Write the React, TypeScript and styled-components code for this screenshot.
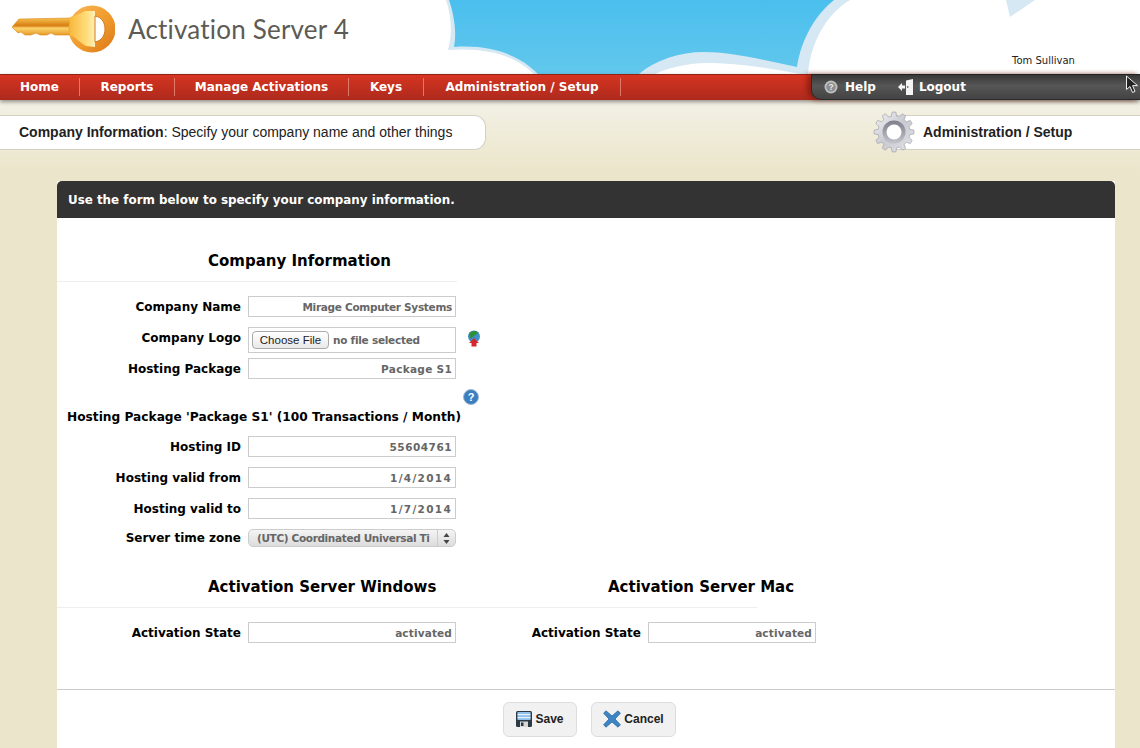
import styled, { createGlobalStyle } from 'styled-components';

const GlobalStyle = createGlobalStyle`
  html, body {
    margin: 0;
    padding: 0;
    height: 748px;
    overflow: hidden;
    background: #ebe6cb;
    font-family: "DejaVu Sans", sans-serif;
  }
  * { box-sizing: border-box; }
`;

const Page = styled.div`
  position: relative;
  height: 748px;
  display: flex;
  flex-direction: column;
  background: linear-gradient(#f3f1e6 100px, #ebe6cb 170px);
`;

const Header = styled.header`
  position: relative;
  height: 74px;
  background: #fff;
  flex: none;
`;
const Sky = styled.svg`
  position: absolute;
  inset: 0;
`;
const Brand = styled.div`
  position: relative;
  display: flex;
  align-items: center;
  height: 60px;
  gap: 13px;
  padding-left: 10px;
`;
const BrandName = styled.span`
  margin-bottom: 2px;
  font-family: "Lato", sans-serif;
  font-size: 26px;
  letter-spacing: 0.2px;
  color: #5d5b53;
`;
const UserName = styled.span`
  position: absolute;
  left: 1012px;
  top: 55px;
  font-size: 10px;
  color: #222;
  line-height: 12px;
`;

const NavBar = styled.nav`
  flex: none;
  height: 26px;
  display: flex;
  justify-content: space-between;
  background: linear-gradient(#d63421, #ad2a1d);
  border-top: 1px solid #8f2416;
  box-shadow: 0 2px 4px rgba(70, 70, 60, 0.55);
  position: relative;
`;
const NavList = styled.ul`
  margin: 0;
  padding: 0 0 2px;
  list-style: none;
  display: flex;
  align-items: center;
`;
const NavItem = styled.li<{ $width: number }>`
  width: ${(p) => p.$width}px;
  height: 18px;
  line-height: 18px;
  text-align: center;
  border-right: 1px solid #e0786a;
  font-size: 12px;
  font-weight: 700;
  color: #fff;
  white-space: nowrap;
`;
const UserMenu = styled.div`
  width: 329px;
  display: flex;
  align-items: center;
  padding-left: 12px;
  border-bottom-left-radius: 10px;
  background: linear-gradient(#383838, #565656 45%, #434343);
  border-top: 1px solid #222;
  border-left: 1px solid #2a2a2a;
  border-bottom: 1px solid #2a2a2a;
  box-shadow: -4px 0 5px rgba(110, 20, 10, 0.6);
  margin-top: -1px;
`;
const MenuLink = styled.span<{ $gap: number; $after: number }>`
  display: flex;
  align-items: center;
  gap: ${(p) => p.$gap}px;
  margin-right: ${(p) => p.$after}px;
  font-size: 12px;
  font-weight: 700;
  color: #fff;
`;
const Pointer = styled.svg`
  position: absolute;
  left: 1125px;
  top: 0;
`;

const TitleRow = styled.div`
  flex: none;
  height: 35px;
  margin-top: 15px;
  display: flex;
  justify-content: space-between;
  font-family: "Liberation Sans", sans-serif;
  font-size: 14px;
  color: #222;
`;
const PageTitle = styled.div`
  width: 486px;
  padding: 0 0 2px 19px;
  display: flex;
  align-items: center;
  background: #fff;
  border: 1px solid #d2d0c2;
  border-left: 0;
  border-radius: 0 12px 12px 0;
  white-space: pre;
`;
const Strong = styled.b`
  font-weight: 700;
`;
const Section = styled.div`
  position: relative;
  width: 247px;
  padding: 0 0 2px 29px;
  display: flex;
  align-items: center;
  background: #fff;
  border: 1px solid #d2d0c2;
  border-right: 0;
  font-weight: 700;
`;
const GearIcon = styled.svg`
  position: absolute;
  left: -21px;
  top: -5px;
`;

const Panel = styled.main`
  flex: 1;
  margin: 31px 25px 0 57px;
  display: flex;
  flex-direction: column;
  background: #fff;
`;
const PanelHead = styled.div`
  flex: none;
  height: 37px;
  padding-left: 11px;
  display: flex;
  align-items: center;
  background: #333;
  border-radius: 5px 5px 0 0;
  font-size: 11.9px;
  font-weight: 700;
  color: #fff;
`;
const Form = styled.form`
  flex: none;
  height: 472px;
  border-bottom: 1px solid #ccc;
`;
const Heading = styled.h2<{ $top?: number }>`
  margin: 0;
  padding: ${(p) => p.$top ?? 0}px 0 10px 151px;
  font-size: 15px;
  line-height: 20px;
  font-weight: 700;
  color: #000;
  white-space: nowrap;
`;
const HeadingRule = styled.div<{ $width: number }>`
  width: ${(p) => p.$width}px;
  border-bottom: 1px solid #eee;
`;
const Columns = styled.div`
  display: flex;
`;
const Column = styled.div<{ $width: number }>`
  width: ${(p) => p.$width}px;
`;
const Row = styled.div<{ $top: number; $field?: number }>`
  display: grid;
  grid-template-columns: 184px ${(p) => p.$field ?? 208}px;
  column-gap: 7px;
  margin-top: ${(p) => p.$top}px;
  align-items: center;
`;
const Label = styled.label<{ $raise?: number }>`
  padding-bottom: ${(p) => p.$raise ?? 0}px;
  text-align: right;
  font-size: 12px;
  font-weight: 700;
  color: #000;
  white-space: nowrap;
`;
const Field = styled.input<{ $spacing?: number }>`
  display: block;
  width: 100%;
  height: 21px;
  padding: 0 3px;
  border: 1px solid #ccc;
  background: #fff;
  text-align: right;
  font-family: "DejaVu Sans", sans-serif;
  font-size: 10.5px;
  font-weight: 700;
  letter-spacing: ${(p) => p.$spacing ?? 0}px;
  color: #666;
  outline: none;
`;
const FileBox = styled.div`
  position: relative;
  height: 26px;
  padding-left: 3px;
  display: flex;
  align-items: center;
  gap: 4px;
  border: 1px solid #ccc;
  font-size: 10.5px;
  font-weight: 700;
  letter-spacing: -0.25px;
  color: #666;
`;
const ChooseButton = styled.button`
  width: 77px;
  height: 18px;
  padding: 0;
  border: 1px solid #aaa;
  border-radius: 4px;
  background: linear-gradient(#fff, #e9e9e9);
  font-family: "Liberation Sans", sans-serif;
  font-size: 11.5px;
  letter-spacing: 0;
  color: #222;
`;
const SideIcon = styled.svg<{ $left: number; $top: number }>`
  position: absolute;
  left: ${(p) => p.$left}px;
  top: ${(p) => p.$top}px;
`;
const PackageRow = styled.div`
  position: relative;
  margin-top: 30px;
  padding-left: 10px;
  font-size: 12.2px;
  line-height: 16px;
  font-weight: 700;
  color: #000;
  white-space: nowrap;
`;
const SelectBox = styled.div`
  height: 18px;
  padding-left: 8px;
  display: flex;
  align-items: center;
  justify-content: space-between;
  border: 1px solid #ccc;
  border-radius: 5px;
  background: linear-gradient(#f4f4f4, #dcdcdc);
  font-size: 10.5px;
  font-weight: 700;
  letter-spacing: -0.35px;
  color: #666;
  white-space: nowrap;
`;
const SelectArrows = styled.span`
  flex: none;
  width: 18px;
  height: 100%;
  display: flex;
  align-items: center;
  justify-content: center;
  border-left: 1px solid #ccc;
`;
const Footer = styled.div`
  flex: 1;
  padding: 12px 0 0 7px;
  display: flex;
  justify-content: center;
  align-items: flex-start;
  gap: 14px;
`;
const ActionButton = styled.button<{ $width: number }>`
  width: ${(p) => p.$width}px;
  height: 35px;
  padding: 0 0 1px;
  display: flex;
  align-items: center;
  justify-content: center;
  gap: 3px;
  border: 1px solid #ddd;
  border-radius: 6px;
  background: #f1f1f1;
  font-family: "Liberation Sans", sans-serif;
  font-size: 12px;
  font-weight: 700;
  color: #222;
`;

function KeyLogo() {
  return (
    <svg width="105" height="50" viewBox="0 0 105 50">
      <defs>
        <linearGradient id="keyBlade" x1="0" y1="0" x2="0" y2="1">
          <stop offset="0" stopColor="#f7c24e" />
          <stop offset="0.45" stopColor="#d87e14" />
          <stop offset="0.6" stopColor="#fbd36a" />
          <stop offset="1" stopColor="#e89a28" />
        </linearGradient>
        <linearGradient id="keyHead" x1="0" y1="0" x2="1" y2="1">
          <stop offset="0" stopColor="#f7b956" />
          <stop offset="0.55" stopColor="#f09a2c" />
          <stop offset="1" stopColor="#d9771a" />
        </linearGradient>
        <linearGradient id="keyShine" x1="0" y1="0" x2="1" y2="0">
          <stop offset="0" stopColor="#f9b93e" />
          <stop offset="0.7" stopColor="#ffdf80" />
          <stop offset="1" stopColor="#fff0b8" />
        </linearGradient>
      </defs>
      <path
        d="M2 22 L9 14 L62 13 L66 27 L62 30 L45 30 L41 28 L37 30 L30 30 L26 28 L21 30 L15 30 L11 27 L8 28 Z"
        fill="url(#keyBlade)"
        stroke="#d9861c"
        strokeWidth="0.6"
      />
      <circle cx="82" cy="24" r="23.5" fill="url(#keyHead)" />
      <path d="M60 12 C66 11 70 8 75 6 L85 6 L85 42 L76 41 C70 38 66 32 60 30 Z" fill="url(#keyShine)" />
      <path d="M85 11 C92 12 95 18 95 24 C95 31 91 36 85 37 Z" fill="#fff" stroke="#d47a18" strokeWidth="1" />
    </svg>
  );
}

// gear outline with 12 teeth, centred on 0,0
function gearPath() {
  const points: string[] = [];
  for (let i = 0; i < 12; i++) {
    const a = (i * Math.PI * 2) / 12;
    const step = (Math.PI * 2) / 12;
    const corners: [number, number][] = [
      [16, a - step * 0.32],
      [20, a - step * 0.18],
      [20, a + step * 0.18],
      [16, a + step * 0.32],
    ];
    corners.forEach(([r, t]) => {
      points.push(`${(r * Math.sin(t)).toFixed(2)} ${(-r * Math.cos(t)).toFixed(2)}`);
    });
  }
  return `M${points.join(' L')} Z`;
}

function GearPicture() {
  return (
    <GearIcon width="42" height="42" viewBox="-21 -21 42 42">
      <defs>
        <linearGradient id="gearFill" x1="0" y1="0" x2="1" y2="1">
          <stop offset="0" stopColor="#f4f4f6" />
          <stop offset="0.5" stopColor="#c9c9d2" />
          <stop offset="1" stopColor="#e6e6ea" />
        </linearGradient>
        <linearGradient id="gearRing" x1="0" y1="0" x2="0" y2="1">
          <stop offset="0" stopColor="#7f7f8c" />
          <stop offset="1" stopColor="#c4c4cc" />
        </linearGradient>
      </defs>
      <path d={gearPath()} fill="url(#gearFill)" stroke="#a2a2aa" strokeWidth="0.7" />
      <circle r="11.5" fill="url(#gearRing)" />
      <circle r="7.5" fill="#fff" />
    </GearIcon>
  );
}

export default function App() {
  return (
    <Page>
      <GlobalStyle />
      <Header>
        <Sky width="1140" height="74" viewBox="0 0 1140 74">
          <defs>
            <linearGradient id="skyFill" x1="0" y1="0" x2="0" y2="1">
              <stop offset="0" stopColor="#4abfee" />
              <stop offset="1" stopColor="#62c7ec" />
            </linearGradient>
          </defs>
          <rect x="440" width="420" height="74" fill="#d5e8f3" />
          <path d="M449 0 C454 15 457 32 454 47 C490 44 520 55 538 74 L639 74 C655 60 680 52 704 52 C730 52 765 60 797 67 C801 40 815 15 834 0 Z" fill="url(#skyFill)" />
          <path d="M0 0 L446 0 C451 15 453 32 448 50 C485 47 515 55 534 74 L0 74 Z" fill="#fff" />
          <path d="M655 74 C670 67 690 63 706 63 C735 63 770 68 800 74 Z" fill="#fff" />
          <path d="M850 0 C825 15 810 45 808 74 L1140 74 L1140 0 Z" fill="#fff" />
          <path d="M1006 0 L1010 17 L1035 0 Z" fill="#d5e8f3" />
        </Sky>
        <Brand>
          <KeyLogo />
          <BrandName>Activation Server 4</BrandName>
        </Brand>
        <UserName>Tom Sullivan</UserName>
      </Header>

      <NavBar>
        <NavList>
          <NavItem $width={80}>Home</NavItem>
          <NavItem $width={95}>Reports</NavItem>
          <NavItem $width={174}>Manage Activations</NavItem>
          <NavItem $width={75}>Keys</NavItem>
          <NavItem $width={197}>Administration / Setup</NavItem>
        </NavList>
        <UserMenu>
          <MenuLink $gap={7} $after={22}>
            <svg width="14" height="14" viewBox="0 0 14 14">
              <circle cx="7" cy="7" r="6.5" fill="#bdbdbd" />
              <circle cx="7" cy="7" r="4.6" fill="#8d8d8d" />
              <text x="7" y="10" textAnchor="middle" fontSize="8.5" fontWeight="700" fontFamily="Liberation Sans" fill="#e8e8e8">?</text>
            </svg>
            Help
          </MenuLink>
          <MenuLink $gap={6} $after={0}>
            <svg width="15" height="16" viewBox="0 0 15 16">
              <path d="M8 1.5 L15 0 L15 16 L8 16 Z" fill="#f4f4f4" />
              <path d="M0 8 L4 4 L4 6.5 L7 6.5 L7 9.5 L4 9.5 L4 12 Z" fill="#f4f4f4" />
              <rect x="9" y="7" width="1.4" height="2" fill="#777" />
            </svg>
            Logout
          </MenuLink>
        </UserMenu>
        <Pointer width="14" height="20" viewBox="0 0 14 20">
          <path d="M1.5 1 L1.5 14.5 L5 11.5 L7.5 17.5 L10 16.4 L7.6 10.6 L12.5 10.6 Z" fill="#222" stroke="#eee" strokeWidth="1" />
        </Pointer>
      </NavBar>

      <TitleRow>
        <PageTitle>
          <span>
            <Strong>Company Information</Strong>: Specify your company name and other things
          </span>
        </PageTitle>
        <Section>
          <GearPicture />
          Administration / Setup
        </Section>
      </TitleRow>

      <Panel>
        <PanelHead>Use the form below to specify your company information.</PanelHead>
        <Form>
          <Heading $top={33}>Company Information</Heading>
          <HeadingRule $width={400} />
          <Row $top={14}>
            <Label>Company Name</Label>
            <Field readOnly value="Mirage Computer Systems" $spacing={-0.3} />
          </Row>
          <Row $top={10}>
            <Label $raise={4}>Company Logo</Label>
            <FileBox>
              <ChooseButton type="button">Choose File</ChooseButton>
              no file selected
              <SideIcon $left={218} $top={2} width="14" height="18" viewBox="0 0 14 18">
                <circle cx="7" cy="6.5" r="6" fill="#3f8fc8" />
                <path d="M2 3.5 C5 0.5 9 0.5 11 2.5 C9 5.5 6 5 4.5 9 C3 8 2 6 2 3.5 Z" fill="#2f8f3c" />
                <path d="M7 8 L12 13 L9.5 13 L9.5 16.5 L4.5 16.5 L4.5 13 L2 13 Z" fill="#d6282c" />
              </SideIcon>
            </FileBox>
          </Row>
          <Row $top={5}>
            <Label>Hosting Package</Label>
            <Field readOnly value="Package S1" $spacing={0.3} />
          </Row>
          <PackageRow>
            Hosting Package 'Package S1' (100 Transactions / Month)
            <SideIcon $left={406} $top={-20} width="16" height="16" viewBox="0 0 16 16">
              <circle cx="8" cy="8" r="7.5" fill="#3b7fc0" stroke="#9fb9d0" />
              <text x="8" y="12" textAnchor="middle" fontSize="11" fontWeight="700" fontFamily="Liberation Sans" fill="#fff">?</text>
            </SideIcon>
          </PackageRow>
          <Row $top={11}>
            <Label>Hosting ID</Label>
            <Field readOnly value="55604761" $spacing={0.5} />
          </Row>
          <Row $top={10}>
            <Label>Hosting valid from</Label>
            <Field readOnly value="1/4/2014" $spacing={1.3} />
          </Row>
          <Row $top={10}>
            <Label>Hosting valid to</Label>
            <Field readOnly value="1/7/2014" $spacing={1.3} />
          </Row>
          <Row $top={10}>
            <Label>Server time zone</Label>
            <SelectBox>
              <span>(UTC) Coordinated Universal Ti</span>
              <SelectArrows>
                <svg width="7" height="11" viewBox="0 0 7 11">
                  <path d="M3.5 0 L6.5 4 L0.5 4 Z M3.5 11 L0.5 7 L6.5 7 Z" fill="#444" />
                </svg>
              </SelectArrows>
            </SelectBox>
          </Row>
          <HeadingRule $width={700}>
            <Columns>
              <Column $width={400}>
                <Heading $top={30}>Activation Server Windows</Heading>
              </Column>
              <Column $width={300}>
                <Heading $top={30}>Activation Server Mac</Heading>
              </Column>
            </Columns>
          </HeadingRule>
          <Columns>
            <Column $width={400}>
              <Row $top={14}>
                <Label>Activation State</Label>
                <Field readOnly value="activated" $spacing={0.15} />
              </Row>
            </Column>
            <Column $width={360}>
              <Row $top={14} $field={168}>
                <Label>Activation State</Label>
                <Field readOnly value="activated" $spacing={0.15} />
              </Row>
            </Column>
          </Columns>
        </Form>
        <Footer>
          <ActionButton type="button" $width={74}>
            <svg width="16" height="16" viewBox="0 0 16 16">
              <rect width="16" height="16" rx="1.5" fill="#2c3a46" />
              <rect x="1.5" y="1" width="13" height="8" fill="#8fc0ea" />
              <rect x="1.5" y="3" width="13" height="1.2" fill="#e6f2fb" />
              <rect x="1.5" y="6" width="13" height="1.2" fill="#e6f2fb" />
              <rect x="4" y="10.5" width="8" height="5.5" fill="#d8d8d8" />
              <rect x="5" y="11.5" width="2.5" height="3.5" fill="#2c3a46" />
            </svg>
            Save
          </ActionButton>
          <ActionButton type="button" $width={85}>
            <svg width="18" height="18" viewBox="0 0 18 18">
              <path d="M3 0.8 L9 6 L15 0.8 L17.4 3.2 L12 9 L17.4 14.8 L15 17.2 L9 12 L3 17.2 L0.6 14.8 L6 9 L0.6 3.2 Z" fill="#3d86c6" stroke="#1f5f96" strokeWidth="0.7" />
            </svg>
            Cancel
          </ActionButton>
        </Footer>
      </Panel>
    </Page>
  );
}
